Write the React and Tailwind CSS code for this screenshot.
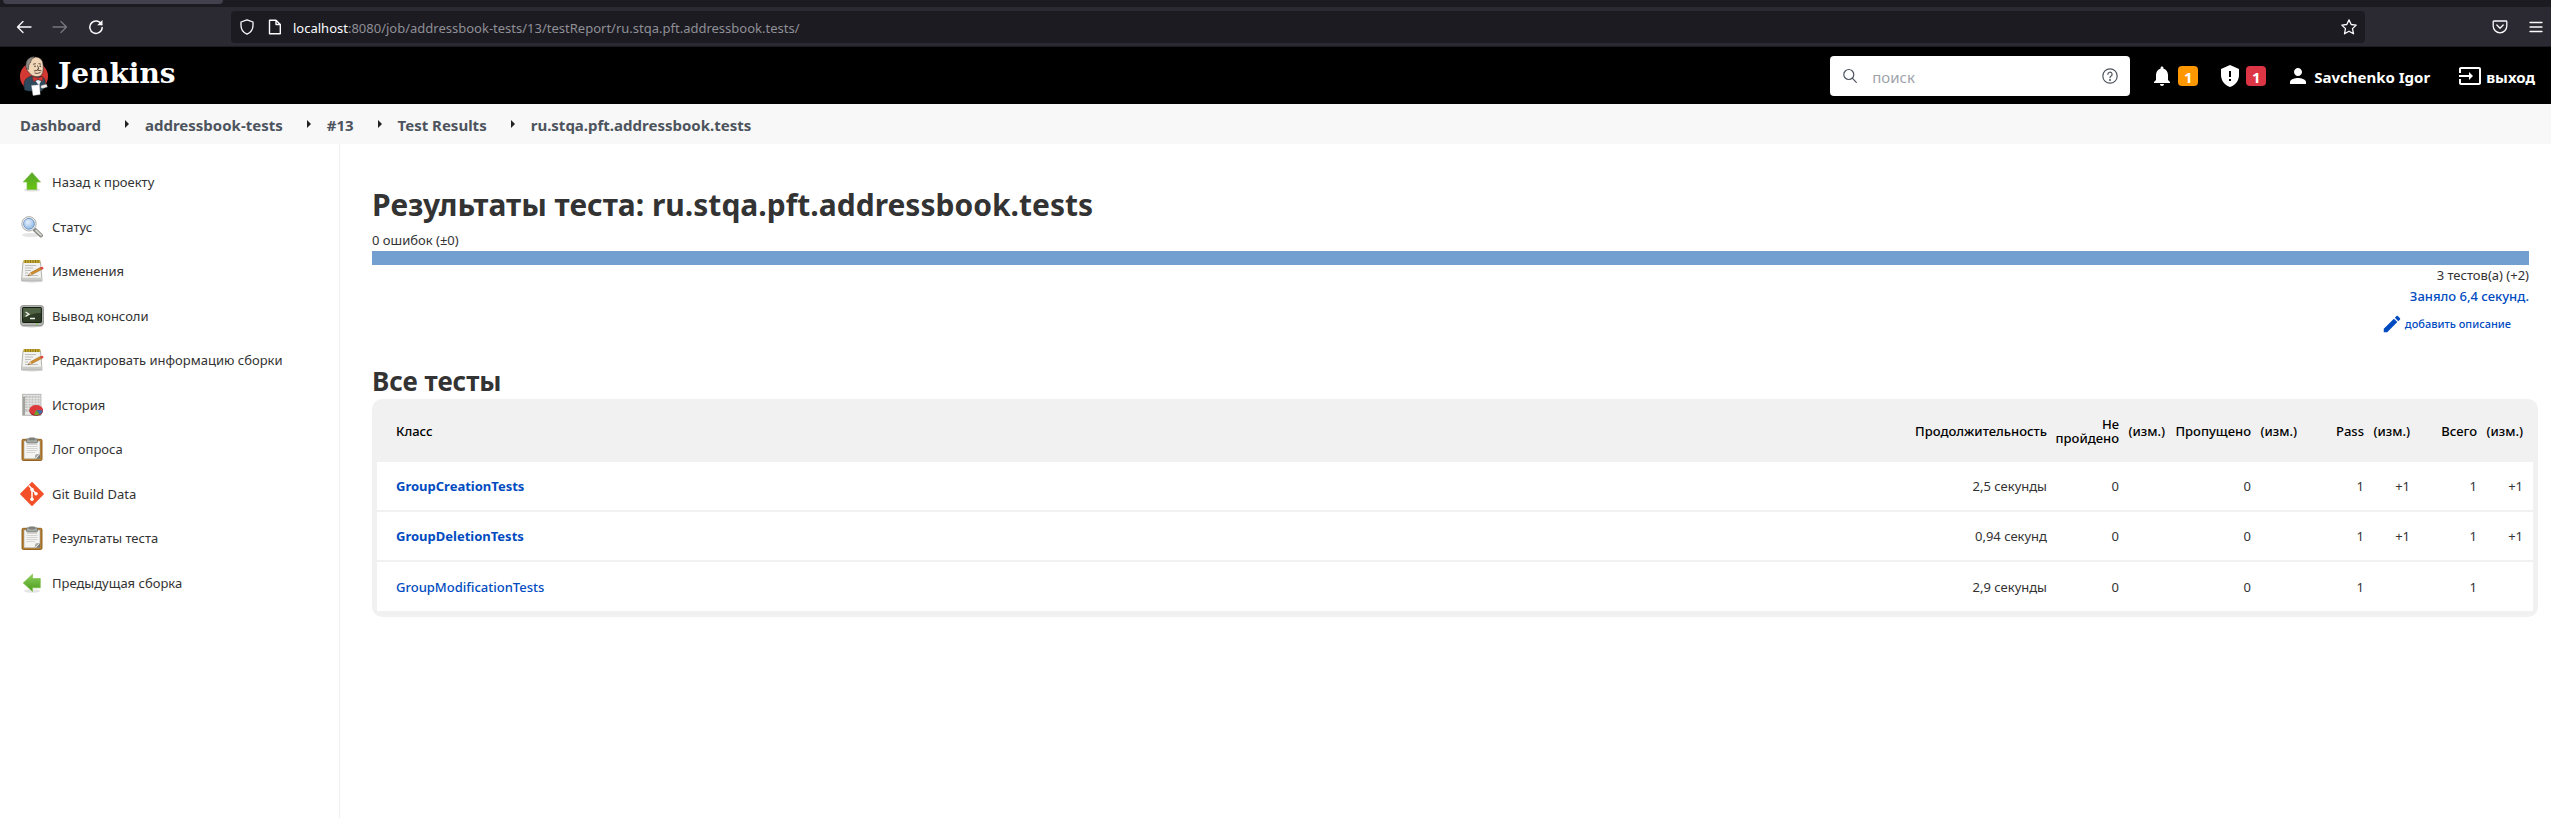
import { Fragment } from 'react';

function UpArrow() {
  return (
    <svg viewBox="0 0 24 24" className="size-6 shrink-0" aria-hidden="true">
      <defs>
        <linearGradient id="green-up" x1="0" y1="0" x2="0" y2="1">
          <stop offset="0" stopColor="#5aa52d" />
          <stop offset="1" stopColor="#66c412" />
        </linearGradient>
      </defs>
      <ellipse cx="12" cy="20" rx="8" ry="1.6" fill="#000" opacity=".12" />
      <path d="M12 2.5 20.5 12H16.8V19.5H7V12H3.2Z" fill="url(#green-up)" stroke="#7fc04c" strokeWidth=".7" />
    </svg>
  );
}

function LeftArrow() {
  return (
    <svg viewBox="0 0 24 24" className="size-6 shrink-0" aria-hidden="true">
      <defs>
        <linearGradient id="green-left" x1="0" y1="0" x2="0" y2="1">
          <stop offset="0" stopColor="#8ad05a" />
          <stop offset="1" stopColor="#4b9a1c" />
        </linearGradient>
      </defs>
      <ellipse cx="12" cy="20" rx="8" ry="1.8" fill="#000" opacity=".1" />
      <path d="M3.2 12 12.5 3.2V7.5H20.3V16.8H12.5V20.5Z" fill="url(#green-left)" stroke="#7fc04c" strokeWidth=".7" />
    </svg>
  );
}

function Magnifier() {
  return (
    <svg viewBox="0 0 24 24" className="size-6 shrink-0" aria-hidden="true">
      <defs>
        <radialGradient id="lens" cx=".4" cy=".35" r=".7">
          <stop offset="0" stopColor="#e4effb" />
          <stop offset="1" stopColor="#8fb6e4" />
        </radialGradient>
      </defs>
      <ellipse cx="11" cy="20" rx="9" ry="2" fill="#000" opacity=".1" />
      <path d="M14.5 14.5 21 20.5" stroke="#888a85" strokeWidth="4" strokeLinecap="round" />
      <path d="M16 15.5 21 20.2" stroke="#d3d7cf" strokeWidth="1.8" strokeLinecap="round" />
      <circle cx="9" cy="8.8" r="7.2" fill="#eeeeec" stroke="#a6aaa5" strokeWidth=".9" />
      <circle cx="9" cy="8.8" r="5.4" fill="url(#lens)" stroke="#5b87c0" strokeWidth=".8" />
    </svg>
  );
}

function Notepad() {
  return (
    <svg viewBox="0 0 24 24" className="size-6 shrink-0" aria-hidden="true">
      <ellipse cx="12" cy="22.2" rx="11" ry="1.3" fill="#000" opacity=".18" />
      <path d="M3 3H20.5L22 21.5H1.5Z" fill="#f1f1ef" stroke="#a9aaa6" strokeWidth=".9" />
      <path d="M1.8 18.8H21.8L22 21.6H1.5Z" fill="#c9cac6" />
      <path d="M3.5 1H20.3V4H3.5Z" fill="#c4a832" />
      <path d="M5.5 1V4M8 1V4M10.5 1V4M13 1V4M15.5 1V4M18 1V4" stroke="#85731b" strokeWidth=".9" />
      <path d="M5 6.5H16M5 9H13M5 11.5H11M5 14H8M5 16.5H18" stroke="#b9bab6" strokeWidth=".9" />
      <path d="M8 16.8 10.5 13.8 20.300 8.600 21.500 10.600 11.600 15.800Z" fill="#d58f32" stroke="#8f5902" strokeWidth=".5" />
      <path d="M8 16.8 10.500 13.800 11.600 15.800Z" fill="#e8c9a0" />
      <path d="M8 16.8 9 15.500 9.600 16.300Z" fill="#333" />
      <path d="M20.2 8.500 22.300 7.700Q24 8.600 23.300 10L21.400 10.700Z" fill="#e0403a" />
    </svg>
  );
}

function Console() {
  return (
    <svg viewBox="0 0 24 24" className="size-6 shrink-0" aria-hidden="true">
      <ellipse cx="12" cy="22" rx="11" ry="1.4" fill="#000" opacity=".2" />
      <rect x=".6" y="1.6" width="22.8" height="20" rx="2.5" fill="#b4b6b2" stroke="#8b8d89" strokeWidth=".9" />
      <rect x="2.6" y="3.5" width="18.8" height="15" rx=".6" fill="#2c3a26" stroke="#151c12" strokeWidth="1" />
      <path d="M3.2 4H20.8V9Q12 9 3.2 14Z" fill="#5b704e" opacity=".75" />
      <path d="M5.6 8 9 10.2 5.6 12.4M10 14.5H15" fill="none" stroke="#eef3ea" strokeWidth="1.3" />
      <circle cx="17" cy="20" r=".8" fill="#73d216" />
    </svg>
  );
}

function History() {
  return (
    <svg viewBox="0 0 24 24" className="size-6 shrink-0" aria-hidden="true">
      <rect x="2.6" y="1.3" width="18.3" height="21" fill="#e6e6e4" stroke="#b0b1ad" strokeWidth=".9" />
      <rect x="5" y="2.8" width="14.5" height="16" fill="#c3c4c1" />
      <path d="M3 3.5H5V22H3Z" fill="#a2a39f" />
      <path d="M8 2.8V18.8M11 2.8V18.8M14 2.8V18.8M17 2.8V18.8M5 5.5H19.5M5 8H19.5M5 10.5H19.5M5 13H19.5M5 15.5H19.5" stroke="#eeeeec" strokeWidth=".7" />
      <ellipse cx="16.2" cy="18" rx="6.8" ry="4.8" fill="#8d1515" />
      <ellipse cx="16.2" cy="17" rx="6.8" ry="4.9" fill="#dd3b3b" />
      <path d="M16.2 17 22.900 17.600Q22.300 20 19.500 21.400Z" fill="#3c6fb4" />
      <path d="M16.2 17 19.500 21.400Q17 22.400 14 21.800Z" fill="#6aa52a" />
    </svg>
  );
}

function Clipboard() {
  return (
    <svg viewBox="0 0 24 24" className="size-6 shrink-0" aria-hidden="true">
      <rect x="2" y="2.3" width="20" height="21.2" rx="1.3" fill="#b9802f" stroke="#8a5a17" strokeWidth=".9" />
      <path d="M4 4H20V21.8H4Z" fill="#f4f4f2" stroke="#93938f" strokeWidth=".5" />
      <path d="M6.5 7.5H17.5M6.5 9.5H17.5M6.5 11.5H17.5M6.5 13.5H17.5M6.5 15.5H15" stroke="#d4d5d1" strokeWidth="1.2" />
      <path d="M14.5 21.8 15.5 17.5 20 16.8Z" fill="#a7a8a4" />
      <path d="M16 21.8H20V17.5Z" fill="#737470" />
      <rect x="6.5" y="1.8" width="11" height="4.2" rx="1" fill="#a5a7a2" stroke="#6f716c" strokeWidth=".7" />
      <rect x="9" y=".4" width="6" height="2.8" rx=".8" fill="#7d7f7a" />
    </svg>
  );
}

function Git() {
  return (
    <svg viewBox="0 0 24 24" className="size-6 shrink-0" aria-hidden="true">
      <path d="M12 .9 23.100 12 12 23.100.9 12Z" fill="#f34f29" stroke="#f34f29" strokeWidth="1.600" strokeLinejoin="round" />
      <path d="M8.7 3.600 12 7V17.500M12 7.500 16 11.500" fill="none" stroke="#fff" strokeWidth="1.500" />
      <circle cx="12" cy="7.5" r="1.8" fill="#fff" />
      <circle cx="12" cy="17.3" r="1.8" fill="#fff" />
      <circle cx="16" cy="11.8" r="1.8" fill="#fff" />
    </svg>
  );
}

function Butler() {
  return (
    <svg viewBox="0 0 28 40" className="h-10 w-7 shrink-0" aria-hidden="true">
      <ellipse cx="14" cy="20.5" rx="14" ry="14" fill="#d33833" />
      <path d="M4.500 34Q3 25 6.500 22.500L11 20 22 20.500Q26 23 25 28L22 35H8Z" fill="#2f4a5c" stroke="#1b2a35" strokeWidth=".6" />
      <path d="M6.3 11Q5.5 3 12 1.300 20 -.3 22.500 5.500 23.600 9 23.200 14 22.800 20 18 20.800 12 21 9 16.500 6.500 15 6.300 11Z" fill="#f0d6b7" stroke="#2b2320" strokeWidth=".6" />
      <path d="M6.2 12.500Q4.800 5.500 9 2.300 12 .4 15 1 10.500 3 10.300 7 8.300 8 8.500 13.500Z" fill="#8c8884" stroke="#2b2320" strokeWidth=".5" />
      <path d="M13 8.300 15.800 7.600M18.500 7.600 21 8.200M17.500 9.500 18.800 13 17 13.500M14.500 17Q17 18.200 20.500 16.500M14 15Q17.500 13.500 21.500 14.800" fill="none" stroke="#3a2d26" strokeWidth=".8" />
      <circle cx="15" cy="10.2" r=".7" fill="#222" />
      <circle cx="20.2" cy="10.2" r=".7" fill="#222" />
      <path d="M12.5 20.500 17.800 22 23 20.200 22.500 25 17.800 23.500 13.500 25.500Z" fill="#d33833" stroke="#81241f" strokeWidth=".5" />
      <path d="M15.5 25 18 24 21 25 19 29.500Z" fill="#e8eef2" />
      <path d="M11.500 29.500 19.500 28.800 20.200 38.500 13 39.500Z" fill="#fff" stroke="#b9b9b9" strokeWidth=".4" />
      <path d="M21 29.500 26.500 28 27.500 31 23 32.500 20.800 32Z" fill="#f0f0f0" stroke="#555" strokeWidth=".4" />
    </svg>
  );
}

const crumbs = ['Dashboard', 'addressbook-tests', '#13', 'Test Results', 'ru.stqa.pft.addressbook.tests'];

const tasks = [
  [UpArrow, 'Назад к проекту'],
  [Magnifier, 'Статус'],
  [Notepad, 'Изменения'],
  [Console, 'Вывод консоли'],
  [Notepad, 'Редактировать информацию сборки'],
  [History, 'История'],
  [Clipboard, 'Лог опроса'],
  [Git, 'Git Build Data'],
  [Clipboard, 'Результаты теста'],
  [LeftArrow, 'Предыдущая сборка'],
];

const heads = ['Продолжительность', 'Не пройдено', '(изм.)', 'Пропущено', '(изм.)', 'Pass', '(изм.)', 'Всего', '(изм.)'];

const rows = [
  { name: 'GroupCreationTests', fresh: true, cells: ['2,5 секунды', '0', '', '0', '', '1', '+1', '1', '+1'] },
  { name: 'GroupDeletionTests', fresh: true, cells: ['0,94 секунд', '0', '', '0', '', '1', '+1', '1', '+1'] },
  { name: 'GroupModificationTests', fresh: false, cells: ['2,9 секунды', '0', '', '0', '', '1', '', '1', ''] },
];

function BrowserChrome() {
  return (
    <div>
      <div className="h-[7px] bg-[#1c1b22] pl-[3px]">
        <div className="h-1 w-[220px] rounded-b bg-[#42414d]" />
      </div>
      <div className="flex h-10 items-center border-b border-[#1c1b22] bg-[#2b2a33] text-[#fbfbfe]">
        <div className="flex w-[231px] shrink-0 items-center gap-5 pl-4">
          <button aria-label="Back">
            <svg viewBox="0 0 16 16" className="size-4" fill="none" stroke="currentColor" strokeWidth="1.3" strokeLinecap="round" strokeLinejoin="round"><path d="M15 8H1.5M7 2.500 1.500 8 7 13.500" /></svg>
          </button>
          <button aria-label="Forward" className="text-[#77767e]">
            <svg viewBox="0 0 16 16" className="size-4" fill="none" stroke="currentColor" strokeWidth="1.3" strokeLinecap="round" strokeLinejoin="round"><path d="M1 8H14.5M9 2.500 14.500 8 9 13.500" /></svg>
          </button>
          <button aria-label="Reload">
            <svg viewBox="0 0 16 16" className="size-4" fill="none" stroke="currentColor" strokeWidth="1.5" strokeLinecap="round"><path d="M13.6 5.500A6.200 6.200 0 1 0 14.200 8.500" /><path d="M14.5 1V6.300H9.200Z" fill="currentColor" stroke="none" /></svg>
          </button>
        </div>
        <div className="flex h-8 min-w-0 flex-1 items-center rounded bg-[#1c1b22] px-2">
          <svg viewBox="0 0 16 16" className="size-4 shrink-0" fill="none" stroke="currentColor" strokeWidth="1.3" strokeLinejoin="round" aria-hidden="true"><path d="M8 .8 14 3V6.500Q14 12.500 8 15.200 2 12.500 2 6.500V3Z" /></svg>
          <svg viewBox="0 0 16 16" className="ml-3 size-4 shrink-0" fill="none" stroke="currentColor" strokeWidth="1.4" strokeLinejoin="round" aria-hidden="true"><path d="M2.5 1.200H9L13.300 5.500V14.800H2.500ZM9 1.200V5.500H13.300" /></svg>
          <p className="ml-2.5 flex-1 truncate pt-0.5 text-[13px] leading-5 text-[#8f8f95]"><span className="text-[#fbfbfe]">localhost</span>:8080/job/addressbook-tests/13/testReport/ru.stqa.pft.addressbook.tests/</p>
          <button aria-label="Bookmark">
            <svg viewBox="0 0 16 16" className="size-4" fill="none" stroke="currentColor" strokeWidth="1.3" strokeLinejoin="round"><path d="M8 .9 10.200 5.500 15.200 6.100 11.500 9.600 12.500 14.800 8 12.200 3.500 14.800 4.500 9.600.8 6.100 5.800 5.500Z" /></svg>
          </button>
        </div>
        <div className="flex w-[186px] shrink-0 items-center justify-end gap-5 pr-[7px]">
          <button aria-label="Pocket">
            <svg viewBox="0 0 16 16" className="size-4" fill="none" stroke="currentColor" strokeWidth="1.3" strokeLinecap="round" strokeLinejoin="round"><path d="M2 2H14Q14.8 2 14.800 2.800V7A6.800 6.800 0 0 1 1.200 7V2.800Q1.200 2 2 2ZM4.800 6 8 9.200 11.200 6" /></svg>
          </button>
          <button aria-label="Menu">
            <svg viewBox="0 0 16 16" className="size-4" fill="none" stroke="currentColor" strokeWidth="1.3" strokeLinecap="round"><path d="M2 3.5H14M2 8H14M2 12.5H14" /></svg>
          </button>
        </div>
      </div>
    </div>
  );
}

function Header() {
  return (
    <header className="flex h-[57px] items-center bg-black pr-4 pl-5 text-[15px] font-bold text-white">
      <a href="#" className="flex items-center gap-2.5">
        <Butler />
        <span className="pb-1 font-['DejaVu_Serif',serif] text-[28px] leading-9">Jenkins</span>
      </a>
      <form className="ml-auto flex h-10 w-[300px] items-center rounded bg-white px-3" onSubmit={(e) => e.preventDefault()}>
        <svg viewBox="0 0 16 16" className="size-4 shrink-0" fill="none" stroke="#4d545d" strokeWidth="1.2" strokeLinecap="round" aria-hidden="true"><circle cx="6.8" cy="6.5" r="5" /><path d="M10.5 10.300 14.300 14.300" /></svg>
        <input type="text" aria-label="поиск" placeholder="поиск" className="ml-3.5 min-w-0 flex-1 pt-0.5 text-[15px] font-normal text-[#333] outline-none placeholder:text-[#a0a4aa]" />
        <a href="#" aria-label="help">
          <svg viewBox="0 0 16 16" className="size-4" fill="none" stroke="#4d545d" strokeWidth="1.2" strokeLinecap="round"><circle cx="8" cy="8" r="7.2" /><path d="M5.9 6.300A2.100 2.100 0 1 1 8.900 8.200Q8 8.700 8 9.700" /><circle cx="8" cy="11.9" r=".4" fill="#4d545d" /></svg>
        </a>
      </form>
      <a href="#" className="ml-5 flex items-center gap-1">
        <svg viewBox="0 0 24 24" className="size-6" fill="currentColor" aria-hidden="true"><path d="M12 22c1.1 0 2-.9 2-2h-4c0 1.1.89 2 2 2zm6-6v-5c0-3.07-1.64-5.64-4.5-6.32V4c0-.83-.67-1.5-1.5-1.5s-1.5.67-1.5 1.5v.68C7.63 5.36 6 7.92 6 11v5l-2 2v1h16v-1l-2-2z" /></svg>
        <span className="flex size-5 items-center justify-center rounded bg-[#ff9800] pt-0.5">1</span>
      </a>
      <a href="#" className="ml-5 flex items-center gap-1">
        <svg viewBox="0 0 24 24" className="size-6" aria-hidden="true"><path d="M12 1 3 5v6c0 5.55 3.84 10.74 9 12 5.16-1.26 9-6.45 9-12V5z" fill="#fff" /><path d="M12 7v6M12 15v2" stroke="#000" strokeWidth="2" /></svg>
        <span className="flex size-5 items-center justify-center rounded bg-[#dc3545] pt-0.5">1</span>
      </a>
      <a href="#" className="ml-5 flex items-center gap-1">
        <svg viewBox="0 0 24 24" className="size-6" fill="currentColor" aria-hidden="true"><path d="M12 12c2.21 0 4-1.79 4-4s-1.79-4-4-4-4 1.79-4 4 1.79 4 4 4zm0 2c-2.67 0-8 1.34-8 4v2h16v-2c0-2.66-5.33-4-8-4z" /></svg>
        <span className="pt-0.5">Savchenko Igor</span>
      </a>
      <a href="#" className="ml-7 flex items-center gap-1">
        <svg viewBox="0 0 24 24" className="size-6" fill="currentColor" aria-hidden="true"><path d="M21 3.01H3c-1.1 0-2 .9-2 2V9h2V4.99h18v14.03H3V15H1v4.01c0 1.1.9 1.98 2 1.98h18c1.1 0 2-.88 2-1.98v-14c0-1.11-.9-2-2-2zM11 16l4-4-4-4v3H1v2h10v3z" /></svg>
        <span className="pt-0.5">выход</span>
      </a>
    </header>
  );
}

export default function App() {
  return (
    <div className="flex min-h-screen flex-col bg-white font-['Noto_Sans',sans-serif] text-[13px] leading-5 text-[#333]">
      <BrowserChrome />
      <Header />
      <nav className="flex h-10 items-center bg-[#f8f8f8] pl-5 text-[15px] font-bold text-[#4d545d]">
        {crumbs.map((c, i) => (
          <Fragment key={c}>
            {i > 0 && (
              <span className="flex w-11 justify-center pl-2">
                <svg viewBox="0 0 4 8" className="h-2 w-1" aria-hidden="true"><path d="M0 0 4 4 0 8Z" fill="#222" /></svg>
              </span>
            )}
            <a href="#" className="pt-0.5">{c}</a>
          </Fragment>
        ))}
      </nav>
      <div className="flex flex-1">
        <aside className="w-[340px] shrink-0 border-r border-[#f0f0f0] pt-4 pl-5">
          <ul className="grid h-[445px] auto-rows-fr">
            {tasks.map(([Icon, label]) => (
              <li key={label} className="flex items-center">
                <a href="#" className="flex items-center gap-2"><Icon />{label}</a>
              </li>
            ))}
          </ul>
        </aside>
        <main className="min-w-0 flex-1 pt-[38px] pr-[13px] pl-8">
          <div className="pr-[9px]">
            <h1 className="text-[30px] leading-[46px] font-bold">Результаты теста: ru.stqa.pft.addressbook.tests</h1>
            <p className="pt-0.5 leading-[21px]">0 ошибок (±0)</p>
            <div className="h-3.5 bg-[#729fcf]" />
            <div className="flex flex-col items-end">
              <p className="leading-[21px]">3 тестов(а) (+2)</p>
              <a href="#" className="leading-[21px] font-medium text-[#004bbf]">Заняло 6,4 секунд.</a>
              <a href="#" className="mt-1.5 mr-[18px] flex items-center gap-0.5 text-[11px] font-medium text-[#004bbf]">
                <svg viewBox="0 0 24 24" className="size-[22px]" fill="currentColor" aria-hidden="true"><path d="M3 17.25V21h3.75L17.81 9.94l-3.75-3.75L3 17.25zM20.71 7.04a.996.996 0 0 0 0-1.41l-2.34-2.34a.996.996 0 0 0-1.41 0l-1.83 1.83 3.75 3.75 1.83-1.83z" /></svg>
                добавить описание
              </a>
            </div>
          </div>
          <h2 className="mt-7 text-[26px] leading-9 font-bold">Все тесты</h2>
          <div className="rounded-[10px] bg-[#f1f1f1] px-[5px] pb-1.5">
            <table className="w-full table-fixed border-collapse text-right">
              <colgroup>
                <col />
                <col className="w-[150px]" />
                <col className="w-[72px]" />
                <col className="w-[46px]" />
                <col className="w-[86px]" />
                <col className="w-[46px]" />
                <col className="w-[67px]" />
                <col className="w-[46px]" />
                <col className="w-[67px]" />
                <col className="w-[51px]" />
              </colgroup>
              <thead>
                <tr className="h-[63px] text-black">
                  <th className="pl-[19px] text-left font-medium">Класс</th>
                  {heads.map((h, i) => (
                    <th key={i} className="pr-[5px] leading-3.5 font-medium last:pr-2.5">{h}</th>
                  ))}
                </tr>
              </thead>
              <tbody>
                {rows.map((r) => (
                  <tr key={r.name} className="h-[50px] border-t-2 border-[#f1f1f1] bg-white first:h-[49px] first:border-t-0">
                    <td className="pl-[19px] text-left text-[#004bbf]">
                      <a href="#" className={r.fresh ? 'font-bold' : 'font-medium'}>{r.name}</a>
                    </td>
                    {r.cells.map((c, i) => (
                      <td key={i} className="pr-[5px] last:pr-2.5">{c}</td>
                    ))}
                  </tr>
                ))}
              </tbody>
            </table>
          </div>
        </main>
      </div>
    </div>
  );
}
